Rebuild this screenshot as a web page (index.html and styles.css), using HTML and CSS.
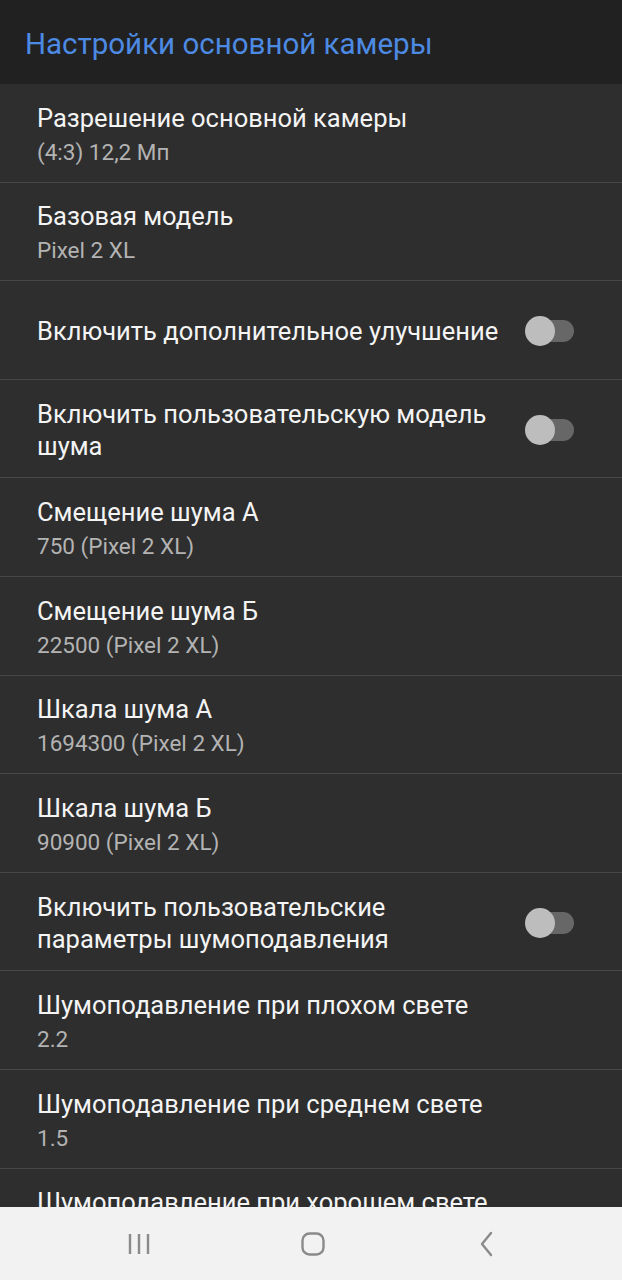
FILE: index.html
```html
<!DOCTYPE html>
<html lang="ru">
<head>
    <meta charset="UTF-8">
    <meta name="viewport" content="width=device-width, initial-scale=1.0">
    <title>Настройки основной камеры</title>
    <link rel="stylesheet" href="styles.css">
</head>
<body>
    <div class="app-bar">
        <h1>Настройки основной камеры</h1>
    </div>

    <div class="pref-list">
        <div class="pref">
            <div class="pref-text">
                <div class="pref-title">Разрешение основной камеры</div>
                <div class="pref-summary">(4:3) 12,2 Мп</div>
            </div>
        </div>
        <div class="pref">
            <div class="pref-text">
                <div class="pref-title">Базовая модель</div>
                <div class="pref-summary">Pixel 2 XL</div>
            </div>
        </div>
        <div class="pref">
            <div class="pref-text">
                <div class="pref-title">Включить дополнительное улучшение</div>
            </div>
            <div class="switch"><span class="thumb"></span></div>
        </div>
        <div class="pref">
            <div class="pref-text">
                <div class="pref-title">Включить пользовательскую модель шума</div>
            </div>
            <div class="switch"><span class="thumb"></span></div>
        </div>
        <div class="pref">
            <div class="pref-text">
                <div class="pref-title">Смещение шума А</div>
                <div class="pref-summary">750 (Pixel 2 XL)</div>
            </div>
        </div>
        <div class="pref">
            <div class="pref-text">
                <div class="pref-title">Смещение шума Б</div>
                <div class="pref-summary">22500 (Pixel 2 XL)</div>
            </div>
        </div>
        <div class="pref">
            <div class="pref-text">
                <div class="pref-title">Шкала шума А</div>
                <div class="pref-summary">1694300 (Pixel 2 XL)</div>
            </div>
        </div>
        <div class="pref">
            <div class="pref-text">
                <div class="pref-title">Шкала шума Б</div>
                <div class="pref-summary">90900 (Pixel 2 XL)</div>
            </div>
        </div>
        <div class="pref">
            <div class="pref-text">
                <div class="pref-title">Включить пользовательские параметры шумоподавления</div>
            </div>
            <div class="switch"><span class="thumb"></span></div>
        </div>
        <div class="pref">
            <div class="pref-text">
                <div class="pref-title">Шумоподавление при плохом свете</div>
                <div class="pref-summary">2.2</div>
            </div>
        </div>
        <div class="pref">
            <div class="pref-text">
                <div class="pref-title">Шумоподавление при среднем свете</div>
                <div class="pref-summary">1.5</div>
            </div>
        </div>
        <div class="pref">
            <div class="pref-text">
                <div class="pref-title">Шумоподавление при хорошем свете</div>
                <div class="pref-summary">1.0</div>
            </div>
        </div>
    </div>

    <div class="nav-bar">
        <svg class="nav-icon" width="26" height="26" viewBox="0 0 26 26">
            <path d="M4 3v20M13 3v20M22 3v20" stroke="#8a8a8a" stroke-width="2.4" fill="none"/>
        </svg>
        <svg class="nav-icon" width="26" height="26" viewBox="0 0 26 26">
            <rect x="2.5" y="2.5" width="21" height="21" rx="7" stroke="#8a8a8a" stroke-width="2.4" fill="none"/>
        </svg>
        <svg class="nav-icon" width="26" height="26" viewBox="0 0 26 26">
            <path d="M17 2L8 13l9 11" stroke="#8a8a8a" stroke-width="2.4" fill="none" stroke-linecap="round" stroke-linejoin="round"/>
        </svg>
    </div>
</body>
</html>
```

FILE: styles.css
```css
html, body {
    margin: 0;
    padding: 0;
}

body {
    font-family: Roboto, "Noto Sans", sans-serif;
    background-color: #2e2e2e;
    color: #f2f2f2;
    width: 622px;
    height: 1280px;
    display: flex;
    flex-direction: column;
    overflow: hidden;
}

.app-bar {
    box-sizing: border-box;
    height: 84px;
    background-color: #212121;
    display: flex;
    align-items: center;
    padding: 3px 25px 0;
    flex-shrink: 0;
}

.app-bar h1 {
    margin: 0;
    font-size: 29.5px;
    font-weight: 400;
    color: #4d8ae3;
}

.pref-list {
    flex: 1;
    overflow: hidden;
}

.pref {
    box-sizing: border-box;
    height: 98.6px;
    border-bottom: 1px solid #474747;
    display: flex;
    align-items: center;
    padding: 3px 48px 0 37px;
}

.pref-text {
    flex: 1;
    min-width: 0;
}

.pref-title {
    font-size: 25.5px;
    line-height: 32px;
    color: #f4f4f4;
}

.pref-summary {
    margin-top: 3px;
    font-size: 22.5px;
    line-height: 30px;
    color: #b3b3b3;
}

.switch {
    position: relative;
    width: 48px;
    height: 22px;
    margin-left: 20px;
    background-color: #676767;
    border-radius: 11px;
    flex-shrink: 0;
}

.switch .thumb {
    position: absolute;
    left: -1px;
    top: -4px;
    width: 30px;
    height: 30px;
    border-radius: 50%;
    background-color: #bdbdbd;
}

.nav-bar {
    height: 73px;
    flex-shrink: 0;
    background-color: #f2f2f2;
    display: flex;
    justify-content: center;
    align-items: center;
    gap: 148px;
    padding-left: 4px;
}
```
